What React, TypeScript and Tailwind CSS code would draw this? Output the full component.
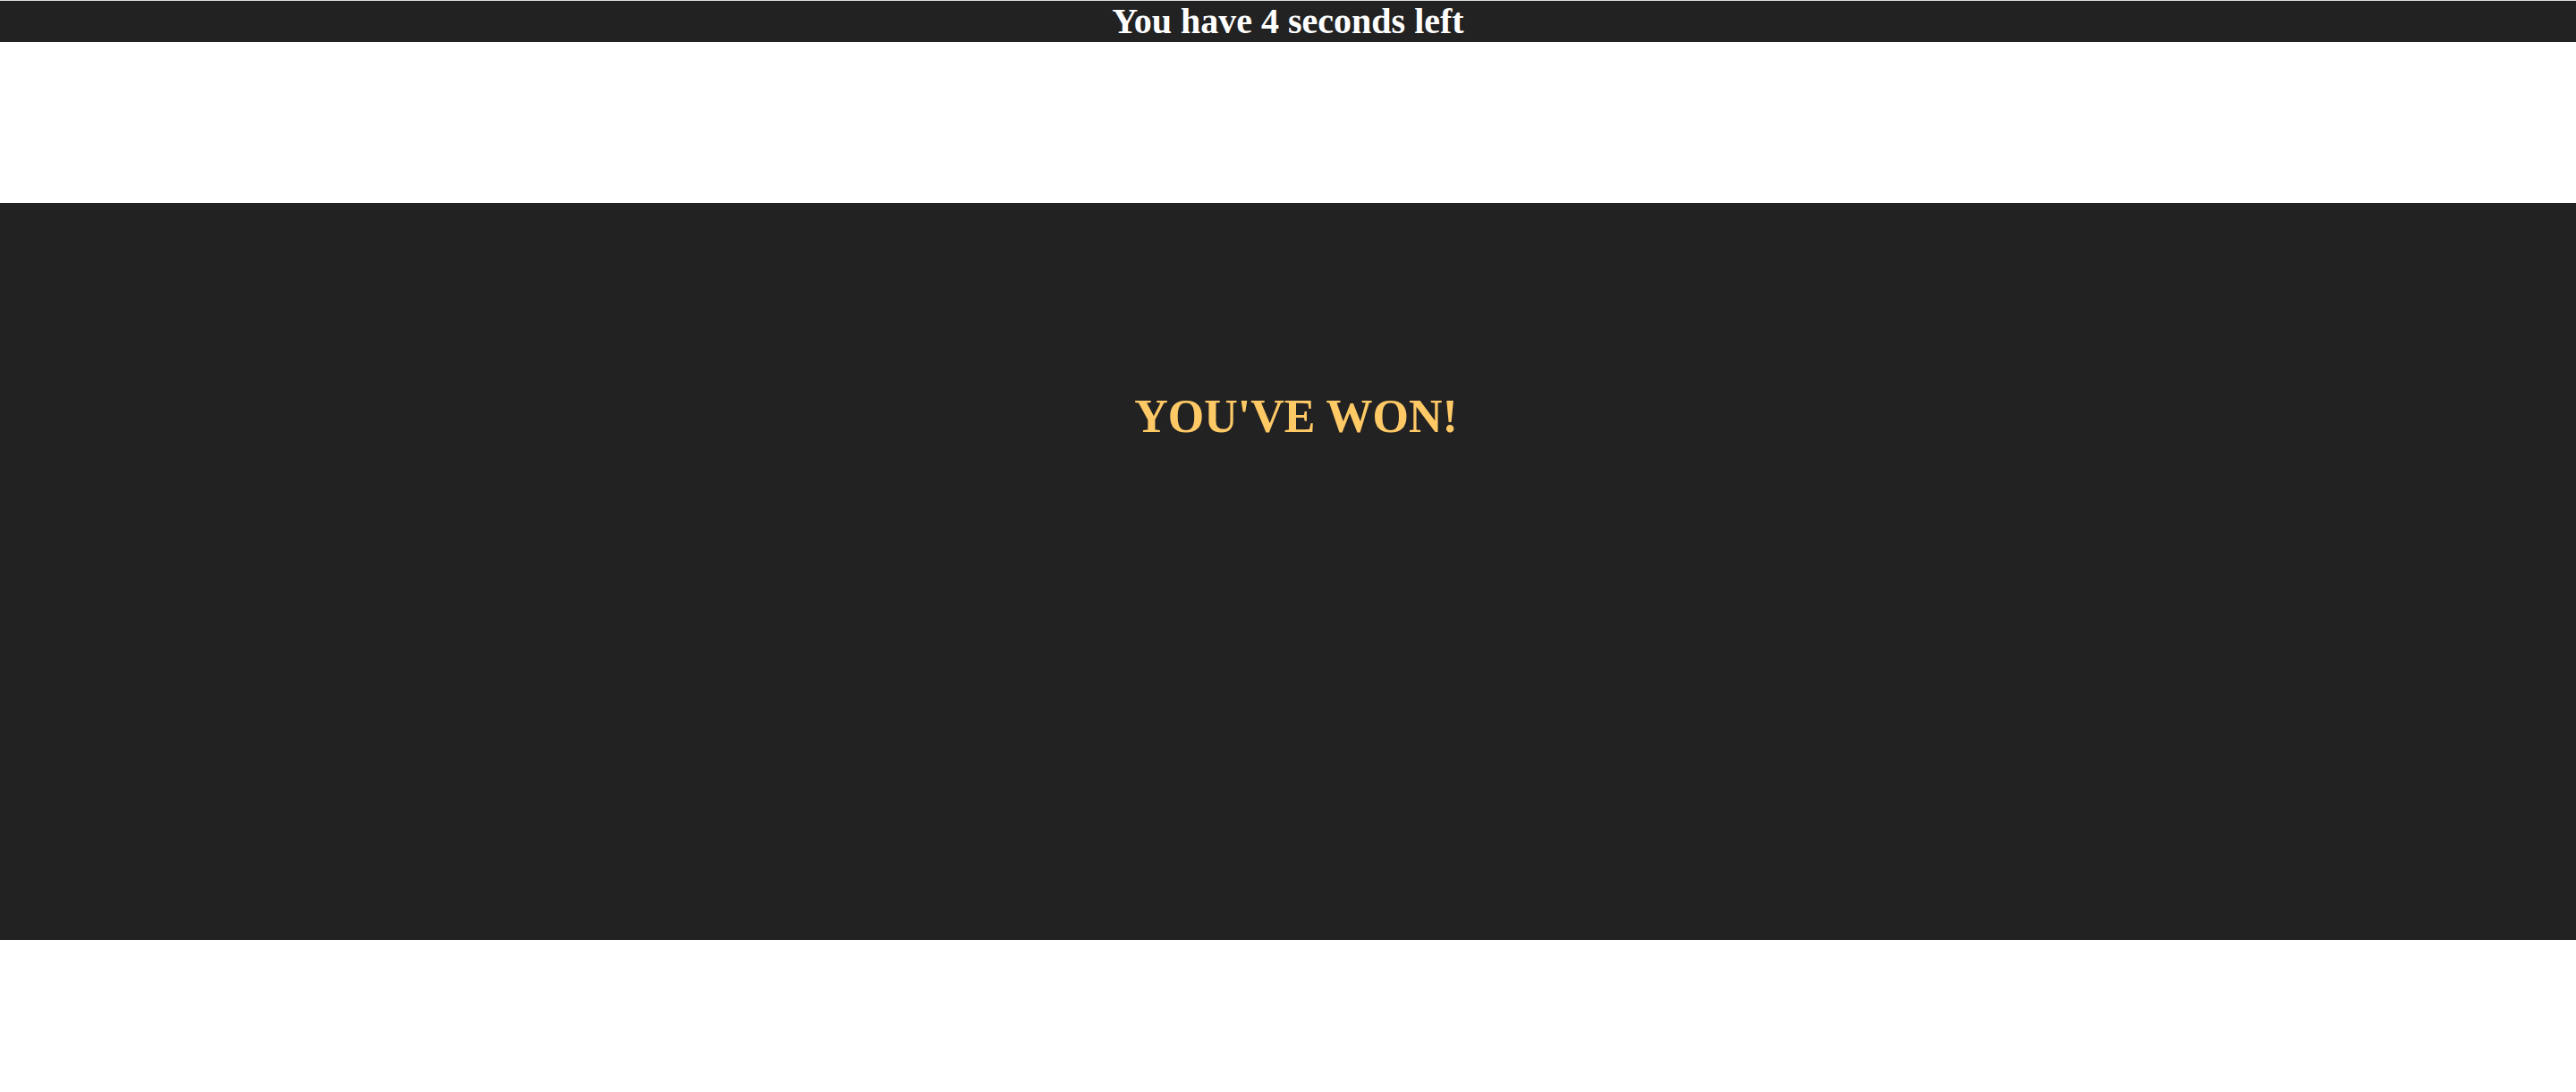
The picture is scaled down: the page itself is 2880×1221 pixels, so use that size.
export default function App() {
  return (
    <div className="min-h-[1221px] bg-white font-['Liberation_Serif','Times_New_Roman',serif]">
      <div className="border-t border-[#dcdcdc] bg-[#222222]">
        <h1 className="text-center text-[40px] font-bold leading-[46px] text-white">
          You have 4 seconds left
        </h1>
      </div>
      <div className="h-[180px]" />
      <div className="h-[824px] bg-[#222222] pt-[210px]">
        <h2 className="pl-[18px] text-center text-[52px] font-bold leading-[58px] text-[#ffc966]">
          YOU&apos;VE WON!
        </h2>
      </div>
    </div>
  );
}
